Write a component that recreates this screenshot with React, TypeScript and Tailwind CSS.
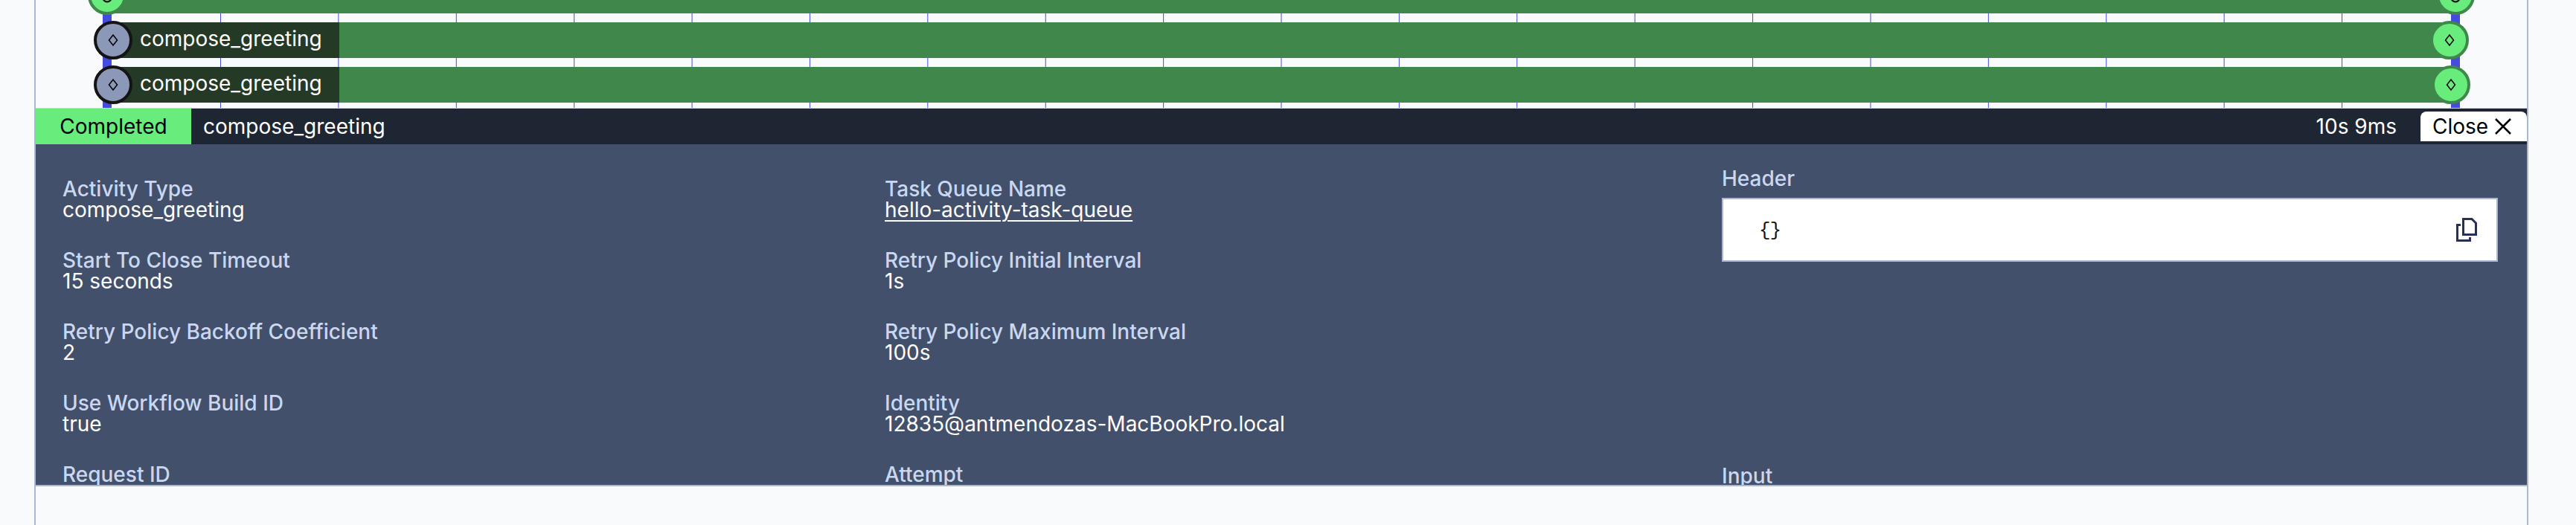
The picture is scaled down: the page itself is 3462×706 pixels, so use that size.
const INTER = "font-['Inter',sans-serif]";

const GRID_LINES = Array.from({ length: 19 }, (_, i) => 296 + 158.39 * i);

function Diamond({ cx, cy }: { cx: number; cy: number }) {
  return (
    <path
      d={`M${cx} ${cy - 7} L${cx + 5.5} ${cy} L${cx} ${cy + 7} L${cx - 5.5} ${cy} Z`}
      fill="none"
      stroke="#000"
      strokeWidth="1.5"
    />
  );
}

function Timeline() {
  return (
    <svg className="absolute inset-0" width="3462" height="146" viewBox="0 0 3462 146">
      {GRID_LINES.map((x) => (
        <rect key={x} x={x} y="0" width="1" height="146" fill="#444ce0" />
      ))}
      <rect x="138" y="0" width="12" height="146" fill="#444ce0" />
      <rect x="3294" y="0" width="12" height="146" fill="#444ce0" />
      <rect x="144" y="0" width="3156" height="18" fill="#40874b" />
      <circle cx="144" cy="-6" r="24" fill="#68ed7c" stroke="#40874b" strokeWidth="4" />
      <circle cx="144" cy="-3.2" r="5.7" fill="none" stroke="#000" strokeWidth="2" />
      <circle cx="3300" cy="-6" r="24" fill="#68ed7c" stroke="#40874b" strokeWidth="4" />
      <circle cx="3300" cy="-3.2" r="5.7" fill="none" stroke="#000" strokeWidth="2" />
      {[
        { y: 54, end: 3292 },
        { y: 114, end: 3294 },
      ].map(({ y, end }) => (
        <g key={y}>
          <rect x="152" y={y - 24} width={end - 152} height="48" fill="#40874b" />
          <circle cx={end} cy={y} r="24" fill="#68ed7c" stroke="#40874b" strokeWidth="4" />
          <Diamond cx={end} cy={y} />
          <rect x="152" y={y - 24} width="304" height="48" fill="#243a26" />
          <circle cx="152" cy={y} r="24" fill="#8b98b8" stroke="#141414" strokeWidth="4" />
          <Diamond cx={152} cy={y} />
        </g>
      ))}
      <rect x="48" y="145" width="3348" height="1" fill="#cfd9e2" />
    </svg>
  );
}

function Field({ label, value, link }: { label: string; value?: string; link?: boolean }) {
  return (
    <div className="h-24 leading-7">
      <div className="h-7 font-medium text-[#c9d7f0]">{label}</div>
      {value && (
        <div className="h-7 text-white">
          <span className={link ? "underline decoration-2 underline-offset-4" : ""}>{value}</span>
        </div>
      )}
    </div>
  );
}

export default function App() {
  return (
    <div className={`h-[706px] w-[3462px] overflow-hidden bg-[#f8fafc] pl-[46px] text-[28px] ${INTER}`}>
      <div className="flex h-[706px] w-[3352px] flex-col border-x-2 border-[#aab7d4]">
        <div className="h-[146px] shrink-0 pl-[140px] pt-7 text-white">
          <Timeline />
          <div className="relative flex h-12 items-center">compose_greeting</div>
          <div className="relative mt-3 flex h-12 items-center">compose_greeting</div>
        </div>
        <div className="flex h-12 shrink-0 items-center bg-[#1f2633] text-white">
          <div className="flex h-12 w-[209px] items-center justify-center bg-[#68ed7c] text-black">Completed</div>
          <div className="flex-1 pl-4">compose_greeting</div>
          <div className="pr-8">10s 9ms</div>
          <div className="flex h-10 w-[143px] items-center gap-2 rounded-t-lg bg-white pl-4 text-black">
            Close
            <svg width="24" height="24" viewBox="0 0 24 24" stroke="#000" strokeWidth="2.5" fill="none">
              <path d="M2 2 L22 22 M22 2 L2 22" />
            </svg>
          </div>
        </div>
        <div className="flex h-[460px] shrink-0 overflow-hidden border-b-2 border-[#aab7d4] bg-[#43506b]">
          <div className="w-[1105px] pl-9 pt-[46px]">
            <Field label="Activity Type" value="compose_greeting" />
            <Field label="Start To Close Timeout" value="15 seconds" />
            <Field label="Retry Policy Backoff Coefficient" value="2" />
            <Field label="Use Workflow Build ID" value="true" />
            <Field label="Request ID" />
          </div>
          <div className="w-[1161px] pl-9 pt-[46px]">
            <Field label="Task Queue Name" value="hello-activity-task-queue" link />
            <Field label="Retry Policy Initial Interval" value="1s" />
            <Field label="Retry Policy Maximum Interval" value="100s" />
            <Field label="Identity" value="12835@antmendozas-MacBookPro.local" />
            <Field label="Attempt" />
          </div>
          <div className="w-[1043px] pt-[26px] font-medium leading-10 text-[#c9d7f0]">
            <div className="h-[46px]">Header</div>
            <div className="flex h-[86px] items-center justify-between border-2 border-[#aab7d4] bg-white pl-[48px] pr-[26px]">
              <span className="pt-0.5 font-['Liberation_Mono',monospace] text-[26px] font-normal tracking-[-1px] text-[#141414]">
                {"{}"}
              </span>
              <svg width="28" height="32" viewBox="0 0 28 32" fill="none" stroke="#273157" strokeWidth="3">
                <path d="M9.5 1.5 H21 L26.5 7 V22.5 H9.5 Z" />
                <path d="M6 9.5 H1.5 V30.5 H18.5 V26" />
              </svg>
            </div>
            <div className="mt-[268px]">Input</div>
          </div>
        </div>
      </div>
    </div>
  );
}
